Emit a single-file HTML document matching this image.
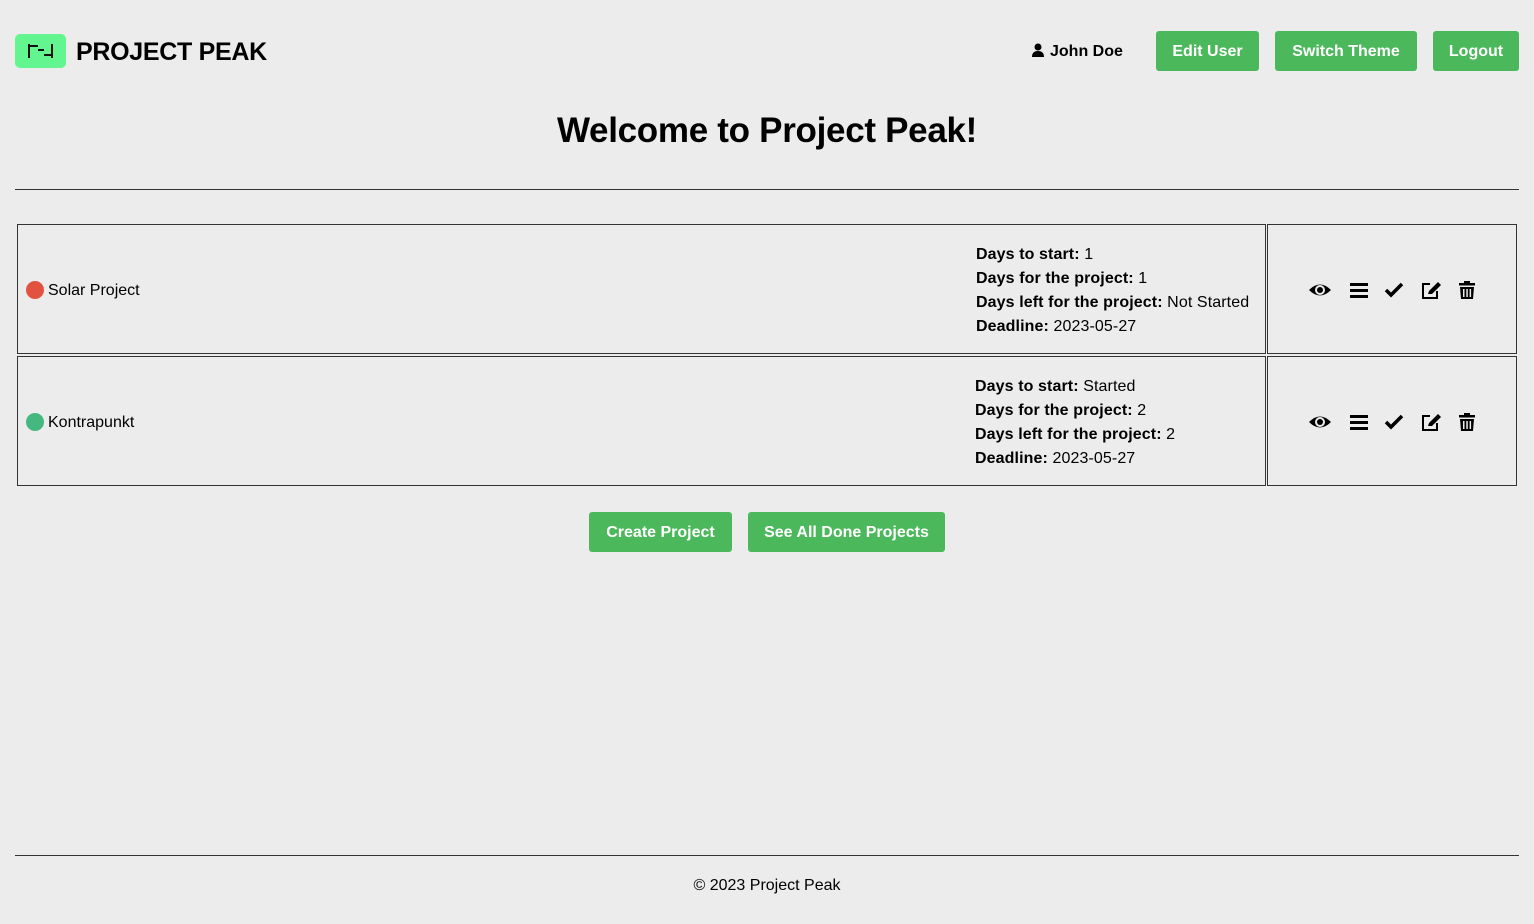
<!DOCTYPE html>
<html><head><style>
body{margin:0;background:#ececec;font-family:"Liberation Sans",sans-serif;color:#000;width:1534px;height:924px;position:relative;overflow:hidden}
.a{position:absolute}
.btn{position:absolute;background:#4cb85c;color:#fff;font-weight:bold;font-size:16px;border-radius:3px;text-align:center;line-height:42px;height:40px}
.cell{position:absolute;border:1px solid #333;box-sizing:border-box}
.info{position:absolute;left:958px;font-size:16px;line-height:24px;white-space:nowrap;letter-spacing:0.1px}
.dot{position:absolute;left:8px;width:18px;height:18px;border-radius:50%}
.name{position:absolute;left:30px;font-size:16px}
.icons{position:absolute;left:40px;display:flex;gap:0}
</style></head><body>
<div class="a" style="left:15px;top:34px;width:51px;height:34px;background:#63f58f;border-radius:5px">
<svg width="51" height="34" viewBox="0 0 51 34"><g fill="#111"><rect x="13" y="10" width="2" height="14"/><rect x="15" y="11" width="8" height="2"/><rect x="23" y="15" width="6" height="2"/><rect x="29" y="20" width="7" height="2"/><rect x="36" y="10" width="2" height="14"/></g></svg></div>
<div class="a" style="left:76px;top:38px;font-size:25px;font-weight:bold;letter-spacing:-0.3px">PROJECT PEAK</div>
<div class="a" style="left:1032px;top:43px;font-size:16px;font-weight:bold">
<svg width="12" height="14" viewBox="0 0 12 14" style="vertical-align:-1px;margin-right:6px"><circle cx="6" cy="4" r="3.5"/><path d="M0 14 Q0 8 6 8 Q12 8 12 14Z"/></svg>John Doe</div>
<div class="btn" style="left:1156px;top:31px;width:103px">Edit User</div>
<div class="btn" style="left:1275px;top:31px;width:142px">Switch Theme</div>
<div class="btn" style="left:1433px;top:31px;width:86px">Logout</div>
<div class="a" style="left:0;width:1534px;top:111px;text-align:center;font-size:35px;font-weight:bold;letter-spacing:-0.3px">Welcome to Project Peak!</div>
<div class="a" style="left:15px;top:189px;width:1504px;height:1px;background:#333"></div>

<div class="cell" style="left:17px;top:224px;width:1249px;height:130px">
<div class="dot" style="top:56px;background:#e25241"></div><div class="name" style="top:57px">Solar Project</div>
<div class="info" style="top:18px"><b>Days to start:</b> 1<br><b>Days for the project:</b> 1<br><b>Days left for the project:</b> Not Started<br><b>Deadline:</b> 2023-05-27</div>
</div>
<div class="cell" style="left:1267px;top:224px;width:250px;height:130px"><div class="icons" style="top:55px"><svg width="175" height="20" viewBox="0 0 175 20">
<path d="M1 10 Q12 -1 23 10 Q12 21 1 10Z" fill="#000"/><circle cx="12" cy="10" r="5" fill="#ececec"/><circle cx="12" cy="10" r="3" fill="#000"/>
<g fill="#000"><rect x="42" y="3" width="18" height="3"/><rect x="42" y="9" width="18" height="3"/><rect x="42" y="15" width="18" height="3"/></g>
<path d="M78 10 L83 15 L94 4" stroke="#000" stroke-width="3.5" fill="none"/>
<path d="M122 4 H115 V18 H129 V11" stroke="#000" stroke-width="2" fill="none"/><path d="M120 14 L121 11 L130 2 L133 5 L124 14Z" fill="#000"/>
<g fill="#000"><rect x="151" y="3" width="16" height="2.5"/><rect x="156" y="1" width="6" height="2.5"/><path d="M152 7 H166 L165 19 H153Z"/></g><g fill="#ececec"><rect x="155" y="9" width="1.5" height="8"/><rect x="158.3" y="9" width="1.5" height="8"/><rect x="161.6" y="9" width="1.5" height="8"/></g>
</svg></div></div>

<div class="cell" style="left:17px;top:356px;width:1249px;height:130px">
<div class="dot" style="top:56px;background:#45b87f"></div><div class="name" style="top:57px">Kontrapunkt</div>
<div class="info" style="top:18px;left:957px"><b>Days to start:</b> Started<br><b>Days for the project:</b> 2<br><b>Days left for the project:</b> 2<br><b>Deadline:</b> 2023-05-27</div>
</div>
<div class="cell" style="left:1267px;top:356px;width:250px;height:130px"><div class="icons" style="top:55px"><svg width="175" height="20" viewBox="0 0 175 20">
<path d="M1 10 Q12 -1 23 10 Q12 21 1 10Z" fill="#000"/><circle cx="12" cy="10" r="5" fill="#ececec"/><circle cx="12" cy="10" r="3" fill="#000"/>
<g fill="#000"><rect x="42" y="3" width="18" height="3"/><rect x="42" y="9" width="18" height="3"/><rect x="42" y="15" width="18" height="3"/></g>
<path d="M78 10 L83 15 L94 4" stroke="#000" stroke-width="3.5" fill="none"/>
<path d="M122 4 H115 V18 H129 V11" stroke="#000" stroke-width="2" fill="none"/><path d="M120 14 L121 11 L130 2 L133 5 L124 14Z" fill="#000"/>
<g fill="#000"><rect x="151" y="3" width="16" height="2.5"/><rect x="156" y="1" width="6" height="2.5"/><path d="M152 7 H166 L165 19 H153Z"/></g><g fill="#ececec"><rect x="155" y="9" width="1.5" height="8"/><rect x="158.3" y="9" width="1.5" height="8"/><rect x="161.6" y="9" width="1.5" height="8"/></g>
</svg></div></div>

<div class="btn" style="left:589px;top:512px;width:143px">Create Project</div>
<div class="btn" style="left:748px;top:512px;width:197px">See All Done Projects</div>
<div class="a" style="left:15px;top:855px;width:1504px;height:1px;background:#333"></div>
<div class="a" style="left:0;width:1534px;top:877px;text-align:center;font-size:16px">© 2023 Project Peak</div>
</body></html>
